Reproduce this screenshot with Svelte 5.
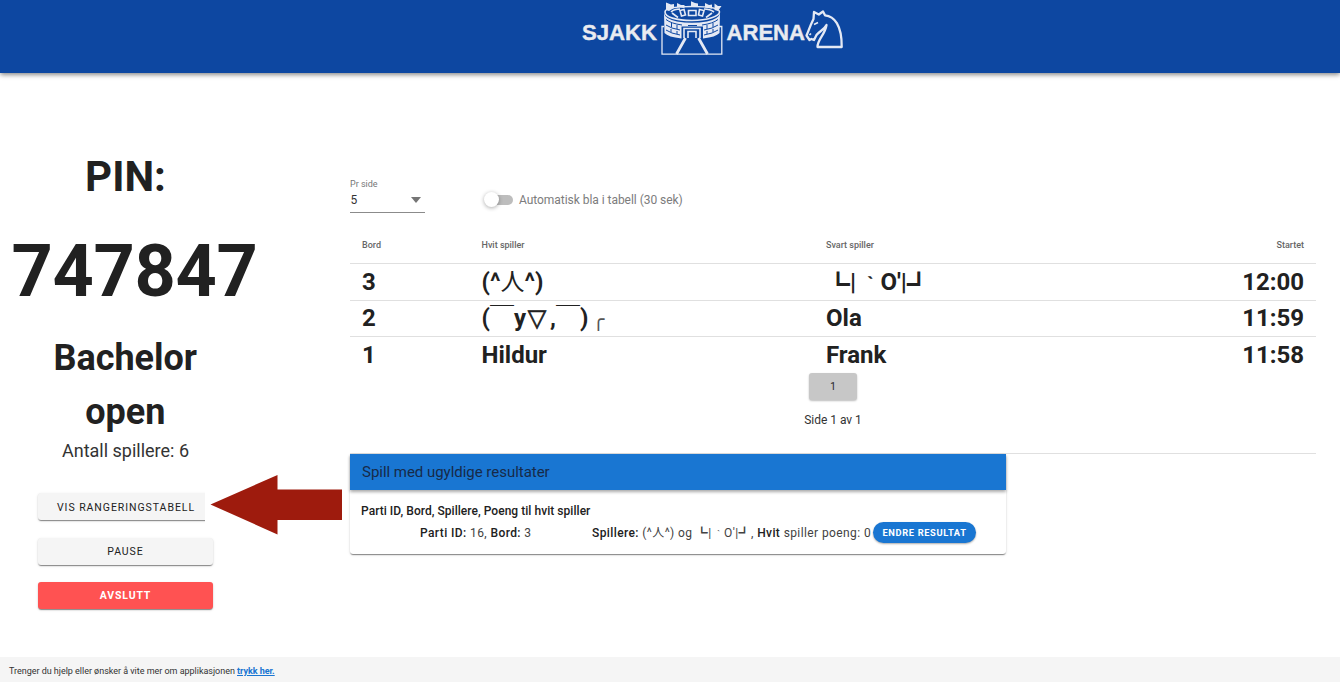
<script>
  const games = [
    { table: 3, white: [['(^'], ['人', 'person'], ['^)']], black: [['┗', 'corner'], ['|'], ['｀', 'grave'], ["O'|"], ['┛', 'corner']], started: '12:00' },
    { table: 2, white: [['(￣y'], ['▽', 'triangle'], [',￣)'], ['╭', 'arc']], black: [['Ola']], started: '11:59' },
    { table: 1, white: [['Hildur']], black: [['Frank']], started: '11:58' }
  ];
</script>

{#snippet name(parts)}{#each parts as [text, kind]}<i class={kind}>{text}</i>{/each}{/snippet}

<div class="page">
  <header>
    <svg class="logo" width="264" height="58" viewBox="580 0 264 58" role="img" aria-label="Sjakk Arena">
      <g class="wordmark">
        <text x="582" y="39.5" textLength="75" lengthAdjust="spacingAndGlyphs">SJAKK</text>
        <text x="726.5" y="39.5" textLength="78.500" lengthAdjust="spacingAndGlyphs">ARENA</text>
      </g>
      <path class="thin" d="M664 26.5H662V54.2H721.8V26.5H719" />
      <path class="solid" d="M664 13Q665 19 677 21.500Q692 24 707 21.500Q719 19 720 13L719.500 33Q716 37 703 38.500V26.500H681.500V38.500Q668 37 664.500 33Z" />
      <path class="cut" d="M666 19.500Q671 23.500 682 25M702 25Q713 23.500 718 19.500M666 25Q671 28.500 680 30M704 30Q713 28.500 718 25M666 30Q671 33.500 680 35M704 35Q713 33.500 718 30M671.500 23V27M677 25V29M671 29V32M677 31V34M707 25V29M713 23V27M707 31V34M713 29V32M688 25.500H697" />
      <path class="medium" d="M665 12C665 8 675 6.500 692 6.500S719.500 8 719.500 12S708 20.500 692 20.500S665 17 665 12Z" />
      <path class="medium" d="M671 12Q674 9 680 9M704 9Q710 9 714 12M672 13L678 17.500M712 13L706 17.500M680 10.500L684 9.500L685.500 15L681.500 16ZM688.500 10.500H696V15.500H688.500ZM699.500 9.500L704 10.500L702.500 16L698.500 15Z" />
      <path class="solid" d="M666 10V2.500L671 4.500L674 4V8L669 11ZM677 7V3L681 5L684.500 5V8ZM691 6V1.200L695 3L698 3.500V6.500ZM705 7.500V3L709 5L712 4.500V8.500ZM714.500 10V3.500L718 6L721.500 6L718 11Z" />
      <path class="medium" d="M684 38V28.500H700V38M688 38V31.500H696V38" />
      <path class="leg" d="M685.500 38L676.500 54M698.500 38L707.500 54" />
      <path class="horse" d="M813.500 19L814 12L818.800 14.500L823 11.500L825 15.300C834 16 842 25 841.700 47H817.500C817.500 39 825 35 826.500 25C824 30 819 31.500 816.500 35L814 40L811.500 39L809.500 40L806.500 35.500C808.500 31 810 26 813.500 19Z" />
      <path class="medium" d="M814 24.500L818 22.500M809.500 35L811 33.500" />
    </svg>
  </header>

  <main>
    <aside>
      <h1 class="pin-label">PIN:</h1>
      <p class="pin">747847</p>
      <h2>Bachelor open</h2>
      <p class="count">Antall spillere: 6</p>
      <div class="actions">
        <div class="clip"><button class="btn">VIS RANGERINGSTABELL</button></div>
        <button class="btn">PAUSE</button>
        <button class="btn danger">AVSLUTT</button>
      </div>
      <svg class="arrow" width="134" height="62" viewBox="209 474 134 62" aria-hidden="true">
        <path d="M210.500 504.500L277.500 475V489.500H342V520H277.500V534.500Z" />
      </svg>
    </aside>

    <section class="content">
      <div class="controls">
        <div class="select">
          <span class="caption">Pr side</span>
          <div class="value"><span>5</span><i class="caret"></i></div>
        </div>
        <div class="switch"><span class="track"><span class="thumb"></span></span>Automatisk bla i tabell (30 sek)</div>
      </div>

      <div class="table">
        <div class="row head"><span>Bord</span><span>Hvit spiller</span><span>Svart spiller</span><span>Startet</span></div>
        {#each games as game}
          <div class="row"><span>{game.table}</span><span>{@render name(game.white)}</span><span>{@render name(game.black)}</span><span>{game.started}</span></div>
        {/each}
      </div>

      <div class="pager">
        <button class="number">1</button>
        <span>Side 1 av 1</span>
      </div>

      <div class="invalid">
        <div class="card">
          <div class="card-title">Spill med ugyldige resultater</div>
          <div class="card-body">
            <div class="legend">Parti ID, Bord, Spillere, Poeng til hvit spiller</div>
            <div class="result">
              <span class="match"><b>Parti ID:</b> 16, <b>Bord:</b> 3</span>
              <span class="players"><b>Spillere:</b> {@render name(games[0].white)} og {@render name(games[0].black)}, <b>Hvit</b> spiller poeng: 0</span>
              <button class="edit">ENDRE RESULTAT</button>
            </div>
          </div>
        </div>
      </div>
    </section>
  </main>

  <footer>Trenger du hjelp eller ønsker å vite mer om applikasjonen&nbsp;<a href="#help">trykk her.</a></footer>
</div>

<style>
  :global(body) { margin: 0; }
  .page { height: 682px; display: flex; flex-direction: column; overflow: hidden; background: #fff; color: #212121; font-family: Roboto, "Noto Sans CJK JP", sans-serif; }
  .page * { box-sizing: border-box; }
  header { position: relative; flex: none; height: 73px; padding-left: 580px; background: #0d47a1; box-shadow: 0 2px 4px -1px #0003, 0 2px 5px #0005; }
  .logo { display: block; }
  .wordmark { fill: #e9ebf0; stroke: #e9ebf0; stroke-width: .4; font: bold 22.800px "Liberation Sans", sans-serif; }
  .solid { fill: #e4e9f4; }
  .cut { fill: none; stroke: #0d47a1; stroke-width: 1; }
  .thin, .medium, .leg, .horse { fill: none; stroke: #e4e9f4; stroke-width: 1.3; }
  .medium { stroke-width: 1.6; }
  .leg { stroke-width: 2.8; }
  .horse { stroke-width: 2.3; stroke-linejoin: round; }
  main { flex: 1; display: flex; min-height: 0; }
  aside { position: relative; width: 250px; flex: none; padding-top: 73px; }
  h1, h2, p { margin: 0; text-align: center; }
  .pin-label { padding-left: 1px; font-size: 42px; line-height: 62px; font-weight: 700; }
  .pin { margin-top: 10px; padding-left: 11.500px; text-align: left; font-size: 72px; line-height: 108px; font-weight: 700; letter-spacing: -.3px; white-space: nowrap; }
  h2 { margin-top: 5px; padding: 0 44.500px 0 45px; font-size: 36px; line-height: 54px; font-weight: 700; }
  .count { height: 26px; padding-left: 1px; font-size: 18px; line-height: 24px; color: #333; }
  .actions { margin: 28px 37px 0 38px; display: flex; flex-direction: column; gap: 17.500px; }
  button { border: 0; padding: 0; font-family: inherit; color: #212121; }
  .btn { height: 27px; width: 175px; border-radius: 3px; background: #f5f5f5; box-shadow: 0 2px 1px -1px #0004, 0 1px 1px #0003, 0 1px 3px #0002; font-size: 10.500px; line-height: 27px; letter-spacing: .95px; font-weight: 400; }
  .clip { height: 27px; width: 167px; clip-path: inset(-4px 0 -4px -4px); }
  .clip .btn { padding: 1px 0 0 1px; }
  .danger { background: #ff5252; color: #fff; font-weight: 700; letter-spacing: .85px; }
  .arrow { position: absolute; left: 209px; top: 401px; }
  .arrow path { fill: #9e1b0d; }
  .content { width: 966px; margin-left: 100px; padding-top: 105px; }
  .controls { display: flex; height: 36px; }
  .select { width: 75px; height: 35px; border-bottom: 1px solid #8b8b8b; }
  .caption { display: block; color: #777; font-size: 9px; line-height: 12px; }
  .value { display: flex; justify-content: space-between; align-items: center; padding-left: .5px; font-size: 12px; line-height: 20px; color: #333; }
  .caret { margin-right: 4px; border: 5px solid transparent; border-top: 6px solid #757575; border-bottom: 0; }
  .switch { display: flex; align-items: center; height: 36px; margin-left: 60px; padding-top: 7px; gap: 6px; font-size: 12px; line-height: 18px; letter-spacing: -.04px; color: #7c7c7c; }
  .track { position: relative; width: 28px; height: 10px; border-radius: 5px; background: #bdbdbd; }
  .thumb { position: absolute; left: -1px; top: -3px; width: 15px; height: 15px; border-radius: 50%; background: #fff; box-shadow: 0 1px 4px #0005; }
  .table { margin-top: 13px; }
  .row { height: 36.500px; padding: 0 12px; display: grid; grid-template-columns: 119.500px 344.500px 1fr 100px; align-items: center; border-bottom: 1px solid #e0e0e0; font-size: 24px; line-height: 35px; font-weight: 700; white-space: nowrap; }
  .row span { height: 35px; }
  .row:last-child { border: 0; }
  .row > :last-child { text-align: right; }
  .head { height: 37px; font-size: 9px; font-weight: 500; color: #666; }
  .head + .row { line-height: 36px; }
  .row i, .players i { font-style: normal; }
  i.person { font-weight: 400; }
  i.corner { position: relative; top: .1em; }
  i.grave { position: relative; top: .22em; margin-left: .3em; font-size: .78em; line-height: 1; }
  i.triangle { display: inline-block; width: 1em; padding-right: 2px; text-align: center; font-family: "DejaVu Sans", sans-serif; font-size: 24px; line-height: 1; -webkit-text-stroke: .7px #212121; }
  i.arc { margin-left: 4px; font-family: "DejaVu Sans Mono", monospace; font-size: 20px; font-weight: 400; line-height: 1; color: #555; }
  .pager { height: 80px; display: flex; flex-direction: column; align-items: center; font-size: 12px; color: #333; }
  .pager > span { margin-top: 11px; line-height: 18px; letter-spacing: -.02px; }
  .number { width: 48px; height: 27px; margin-top: -1px; flex: none; background: #c7c7c7; border-radius: 3px; font-size: 10px; box-shadow: 0 1px 2px #0004; }
  .invalid { margin-top: -1px; border-top: 1px solid #e0e0e0; }
  .card { width: 656px; height: 100px; border-radius: 3px; box-shadow: 0 2px 1px -1px #0004, 0 1px 1px #0003, 0 1px 3px #0002; }
  .card-title { height: 36px; padding-left: 12px; background: #1976d2; color: #172a48; font-size: 15px; line-height: 36px; letter-spacing: -.03px; box-shadow: 0 2px 3px #0005; }
  .card-body { padding: 12px 10px 0; }
  .legend { height: 18px; padding-left: 1px; font-size: 12px; line-height: 18px; font-weight: 500; letter-spacing: .04px; }
  .result { height: 26px; padding-left: 60px; display: flex; align-items: center; font-size: 12px; letter-spacing: .4px; line-height: 20px; white-space: nowrap; color: #424242; }
  .match { width: 172px; }
  .players { width: 281px; }
  .result b { font-weight: 500; color: #212121; }
  .edit { width: 103px; height: 21px; border-radius: 11px; background: #1976d2; color: #fff; font-weight: 700; font-size: 9.300px; letter-spacing: .65px; box-shadow: 0 1px 2px #0005; }
  footer { height: 25px; flex: none; padding: 2px 9px 0; background: #f5f5f5; font-size: 9px; line-height: 25px; letter-spacing: -.025px; color: #333; }
  footer a { color: #1976d2; font-weight: 700; }
</style>
